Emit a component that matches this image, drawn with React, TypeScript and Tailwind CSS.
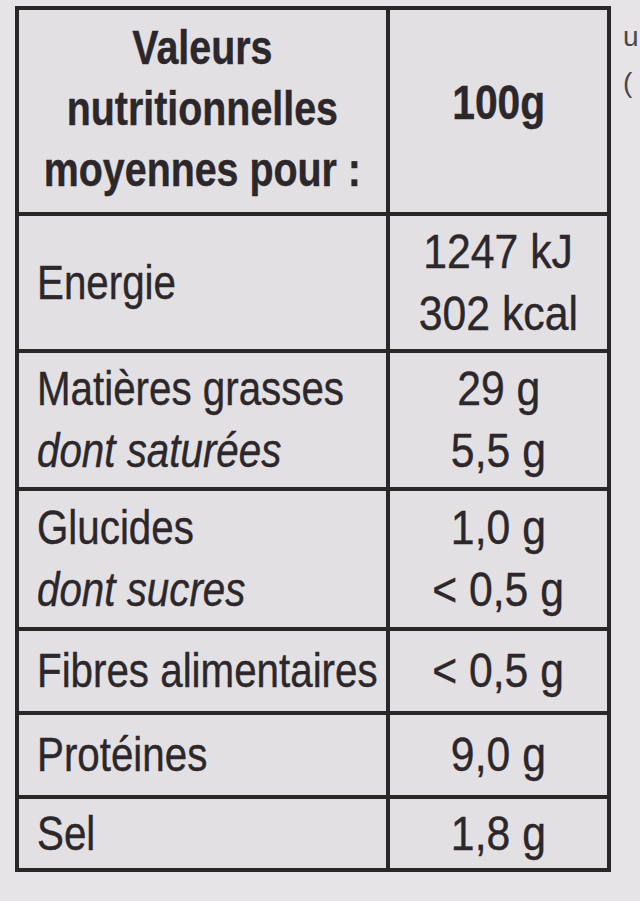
import React from 'react';

const font = { fontFamily: '"Liberation Sans", Arial, sans-serif' };

// the label uses a condensed grotesque; squeeze Liberation Sans to match
const L = ({ children, italic }: { children: React.ReactNode; italic?: boolean }) => (
  <span className={`inline-block origin-left scale-x-[0.84] whitespace-nowrap ${italic ? 'italic' : ''}`}>{children}</span>
);

const V = ({ children }: { children: React.ReactNode }) => (
  <span className="inline-block origin-center scale-x-[0.89] whitespace-nowrap">{children}</span>
);

type Row = {
  h: string;
  left: React.ReactNode;
  right: React.ReactNode;
};

const rows: Row[] = [
  {
    h: 'h-[137px]',
    left: <L>Energie</L>,
    right: (
      <>
        <V>1247 kJ</V>
        <V>302 kcal</V>
      </>
    ),
  },
  {
    h: 'h-[138px]',
    left: (
      <>
        <L>Matières grasses</L>
        <L italic>dont saturées</L>
      </>
    ),
    right: (
      <>
        <V>29 g</V>
        <V>5,5 g</V>
      </>
    ),
  },
  {
    h: 'h-[140px]',
    left: (
      <>
        <L>Glucides</L>
        <L italic>dont sucres</L>
      </>
    ),
    right: (
      <>
        <V>1,0 g</V>
        <V>&lt; 0,5 g</V>
      </>
    ),
  },
  { h: 'h-[84px]', left: <L>Fibres alimentaires</L>, right: <V>&lt; 0,5 g</V> },
  { h: 'h-[84px]', left: <L>Protéines</L>, right: <V>9,0 g</V> },
  { h: 'h-[73px]', left: <L>Sel</L>, right: <V>1,8 g</V> },
];

export default function App() {
  return (
    <div
      className="flex min-h-[901px] items-start bg-[#e6e4e7] pt-[6px] pl-[15px] text-[#2c272a] [-webkit-text-stroke:0.4px_#2c272a]"
      style={font}
    >
      <div className="w-[596px] shrink-0 border-4 border-[#2b2628] bg-[#e3e0e4]">
        {/* header */}
        <div className="grid h-[202px] grid-cols-[371px_1fr]">
          <div className="flex flex-col items-center justify-center border-r-4 border-[#2b2628] pb-[6px] text-[48px] font-bold leading-[61px]">
            <span className="inline-block origin-center scale-x-[0.82] whitespace-nowrap">Valeurs</span>
            <span className="inline-block origin-center scale-x-[0.82] whitespace-nowrap">nutritionnelles</span>
            <span className="inline-block origin-center scale-x-[0.82] whitespace-nowrap">moyennes pour :</span>
          </div>
          <div className="flex items-center justify-center pb-[16px] text-[48px] font-bold">
            <span className="inline-block origin-center scale-x-[0.85]">100g</span>
          </div>
        </div>

        {rows.map((r, i) => (
          <div key={i} className={`grid grid-cols-[371px_1fr] border-t-4 border-[#2b2628] ${r.h}`}>
            <div className="flex flex-col justify-center border-r-4 border-[#2b2628] pl-[18px] text-[48px] leading-[62px]">
              {r.left}
            </div>
            <div className="flex flex-col items-center justify-center text-[48px] leading-[62px]">
              {r.right}
            </div>
          </div>
        ))}
      </div>

      {/* edge of the neighbouring text at the photo's border */}
      <div className="ml-[12px] flex flex-col pt-[8px] text-[28px] leading-[46px] text-[#4a4548] [-webkit-text-stroke:0px]">
        <span>u</span>
        <span>(</span>
      </div>
    </div>
  );
}
